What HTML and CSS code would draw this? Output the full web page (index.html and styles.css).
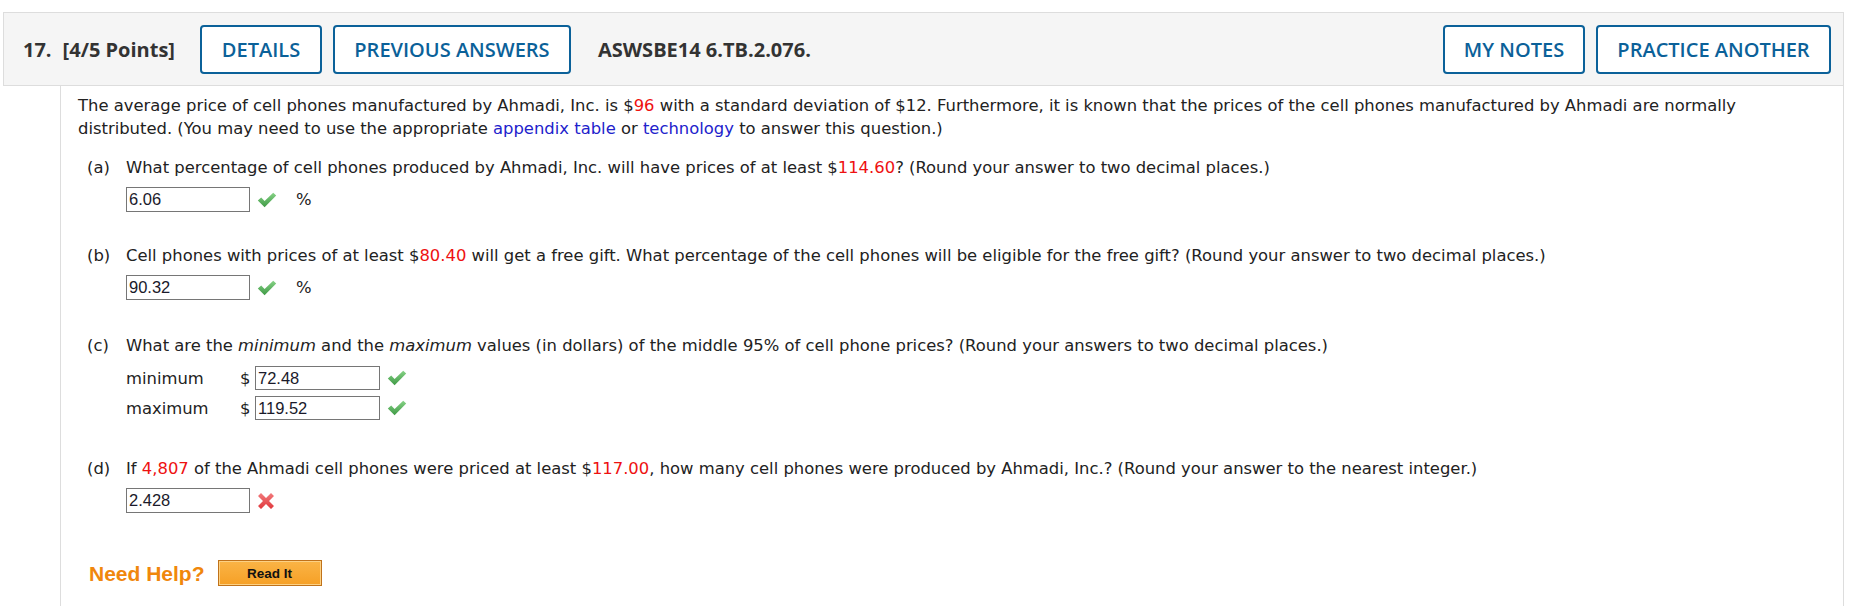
FILE: index.html
```html
<!DOCTYPE html>
<html>
<head>
<meta charset="utf-8">
<link rel="stylesheet" href="styles.css">
</head>
<body>
<div class="question">
  <div class="qhead">
    <div class="qtitle"><span class="qnum">17.</span><span class="qpts">[4/5 Points]</span></div>
    <button class="btn btn-details">DETAILS</button>
    <button class="btn btn-prev">PREVIOUS ANSWERS</button>
    <div class="qid">ASWSBE14 6.TB.2.076.</div>
    <div class="spacer"></div>
    <button class="btn btn-notes">MY NOTES</button>
    <button class="btn btn-practice">PRACTICE ANOTHER</button>
  </div>
  <div class="qbody">
    <p class="intro">The average price of cell phones manufactured by Ahmadi, Inc. is $<span class="red">96</span> with a standard deviation of $12. Furthermore, it is known that the prices of the cell phones manufactured by Ahmadi are normally<br>distributed. (You may need to use the appropriate <span class="link">appendix table</span> or <span class="link">technology</span> to answer this question.)</p>

    <div class="part part-a">
      <div class="plabel">(a)</div>
      <div class="pcontent">
        <div class="ptext">What percentage of cell phones produced by Ahmadi, Inc. will have prices of at least $<span class="red">114.60</span>? (Round your answer to two decimal places.)</div>
        <div class="ansrow">
          <span class="ans">6.06</span>
          <svg class="mark" viewBox="0 0 20 16" width="20" height="16"><defs><linearGradient id="g1" x1="0" y1="0" x2="0" y2="1"><stop offset="0" stop-color="#86d286"/><stop offset="1" stop-color="#3f9a45"/></linearGradient></defs><path d="M0.8 8.6 L4.2 5.6 L7.6 9 L16.2 0.8 L19.2 3.6 L7.6 15.2 Z" fill="url(#g1)"/></svg>
          <span class="unit">%</span>
        </div>
      </div>
    </div>

    <div class="part part-b">
      <div class="plabel">(b)</div>
      <div class="pcontent">
        <div class="ptext">Cell phones with prices of at least $<span class="red">80.40</span> will get a free gift. What percentage of the cell phones will be eligible for the free gift? (Round your answer to two decimal places.)</div>
        <div class="ansrow">
          <span class="ans">90.32</span>
          <svg class="mark" viewBox="0 0 20 16" width="20" height="16"><defs><linearGradient id="g2" x1="0" y1="0" x2="0" y2="1"><stop offset="0" stop-color="#86d286"/><stop offset="1" stop-color="#3f9a45"/></linearGradient></defs><path d="M0.8 8.6 L4.2 5.6 L7.6 9 L16.2 0.8 L19.2 3.6 L7.6 15.2 Z" fill="url(#g2)"/></svg>
          <span class="unit">%</span>
        </div>
      </div>
    </div>

    <div class="part part-c">
      <div class="plabel">(c)</div>
      <div class="pcontent">
        <div class="ptext">What are the <em>minimum</em> and the <em>maximum</em> values (in dollars) of the middle 95% of cell phone prices? (Round your answers to two decimal places.)</div>
        <div class="mmgrid">
          <span class="mmlabel">minimum</span>
          <span class="dollar">$</span>
          <span class="ans ans-c">72.48</span>
          <svg class="mark" viewBox="0 0 20 16" width="20" height="16"><defs><linearGradient id="g3" x1="0" y1="0" x2="0" y2="1"><stop offset="0" stop-color="#86d286"/><stop offset="1" stop-color="#3f9a45"/></linearGradient></defs><path d="M0.8 8.6 L4.2 5.6 L7.6 9 L16.2 0.8 L19.2 3.6 L7.6 15.2 Z" fill="url(#g3)"/></svg>
          <span class="mmlabel">maximum</span>
          <span class="dollar">$</span>
          <span class="ans ans-c">119.52</span>
          <svg class="mark" viewBox="0 0 20 16" width="20" height="16"><defs><linearGradient id="g4" x1="0" y1="0" x2="0" y2="1"><stop offset="0" stop-color="#86d286"/><stop offset="1" stop-color="#3f9a45"/></linearGradient></defs><path d="M0.8 8.6 L4.2 5.6 L7.6 9 L16.2 0.8 L19.2 3.6 L7.6 15.2 Z" fill="url(#g4)"/></svg>
        </div>
      </div>
    </div>

    <div class="part part-d">
      <div class="plabel">(d)</div>
      <div class="pcontent">
        <div class="ptext">If <span class="red">4,807</span> of the Ahmadi cell phones were priced at least $<span class="red">117.00</span>, how many cell phones were produced by Ahmadi, Inc.? (Round your answer to the nearest integer.)</div>
        <div class="ansrow">
          <span class="ans">2.428</span>
          <svg class="mark xmark" viewBox="0 0 18 18" width="18" height="18"><defs><linearGradient id="g5" x1="0" y1="0" x2="0" y2="1"><stop offset="0" stop-color="#f27a7c"/><stop offset="1" stop-color="#e0383c"/></linearGradient></defs><path d="M1 4 L4 1 L9 6 L14 1 L17 4 L12 9 L17 14 L14 17 L9 12 L4 17 L1 14 L6 9 Z" fill="url(#g5)"/></svg>
        </div>
      </div>
    </div>

    <div class="help">
      <span class="needhelp">Need Help?</span>
      <button class="readit">Read It</button>
    </div>
  </div>
</div>
</body>
</html>
```

FILE: styles.css
```css
html, body {
  margin: 0;
  padding: 0;
  background: #ffffff;
}

.question {
  margin: 12px 13px 0 3px;
}

.qhead {
  display: flex;
  align-items: center;
  height: 72px;
  background: #f5f5f5;
  border: 1px solid #dddddd;
  padding: 0 12px 0 19px;
  font-family: "Open Sans", sans-serif;
}

.qtitle {
  font-weight: 700;
  font-size: 20px;
  color: #333333;
  display: flex;
  gap: 11px;
  margin-right: 25px;
}

.btn {
  font-family: "Open Sans", sans-serif;
  font-size: 20px;
  font-weight: 600;
  color: #0b6199;
  background: #ffffff;
  border: 2px solid #0b6199;
  border-radius: 4px;
  height: 49px;
  padding: 0;
  margin-right: 11px;
}

.btn-details { width: 122px; }
.btn-prev { width: 238px; margin-right: 27px; }
.btn-notes { width: 142px; }
.btn-practice { width: 235px; margin-right: 0; }

.qid {
  font-weight: 700;
  font-size: 20px;
  color: #333333;
}

.spacer { flex: 1; }

.qbody {
  margin-left: 57px;
  border-left: 1px solid #dddddd;
  border-right: 1px solid #dddddd;
  padding: 8px 60px 40px 17px;
  font-family: "DejaVu Sans", Verdana, sans-serif;
  font-size: 16.4px;
  line-height: 23px;
  color: #222222;
}

.intro {
  margin: 0;
}

.red { color: #ee1111; }
.link { color: #2222cc; }

.part {
  display: flex;
  margin-left: 9px;
}

.part-a { margin-top: 16px; }
.part-b { margin-top: 32px; }
.part-c { margin-top: 34px; }
.part-d { margin-top: 37px; }

.plabel {
  width: 39px;
  flex: none;
}

.ansrow {
  display: flex;
  align-items: center;
  margin-top: 8px;
  height: 25px;
}

.ans {
  box-sizing: border-box;
  display: inline-block;
  width: 124px;
  height: 25px;
  border: 1px solid #767676;
  font-family: "Liberation Sans", Arial, sans-serif;
  font-size: 16.5px;
  line-height: 23px;
  padding-left: 2px;
  color: #1a1a2a;
  background: #ffffff;
}

.mark {
  margin-left: 7px;
}

.unit {
  margin-left: 19px;
}

.mmgrid {
  display: grid;
  grid-template-columns: 114px 15px 125px 30px;
  grid-auto-rows: 24px;
  row-gap: 6px;
  align-items: center;
  margin-top: 9px;
}

.mmgrid .mark { margin-left: 7px; }

.ans-c {
  width: 125px;
  height: 24px;
  line-height: 22px;
}

.help {
  display: flex;
  align-items: center;
  margin-top: 47px;
  margin-left: 11px;
}

.needhelp {
  font-family: "Liberation Sans", Arial, sans-serif;
  font-weight: 700;
  font-size: 21px;
  color: #f0870c;
}

.readit {
  margin-left: 13px;
  width: 104px;
  height: 26px;
  font-family: "Liberation Sans", Arial, sans-serif;
  font-weight: 700;
  font-size: 13.5px;
  color: #111111;
  background: linear-gradient(#fab446, #f6a026);
  border: 1px solid #c0721a;
  box-shadow: inset 0 0 0 1px #fcd184;
  padding: 0;
}
```
